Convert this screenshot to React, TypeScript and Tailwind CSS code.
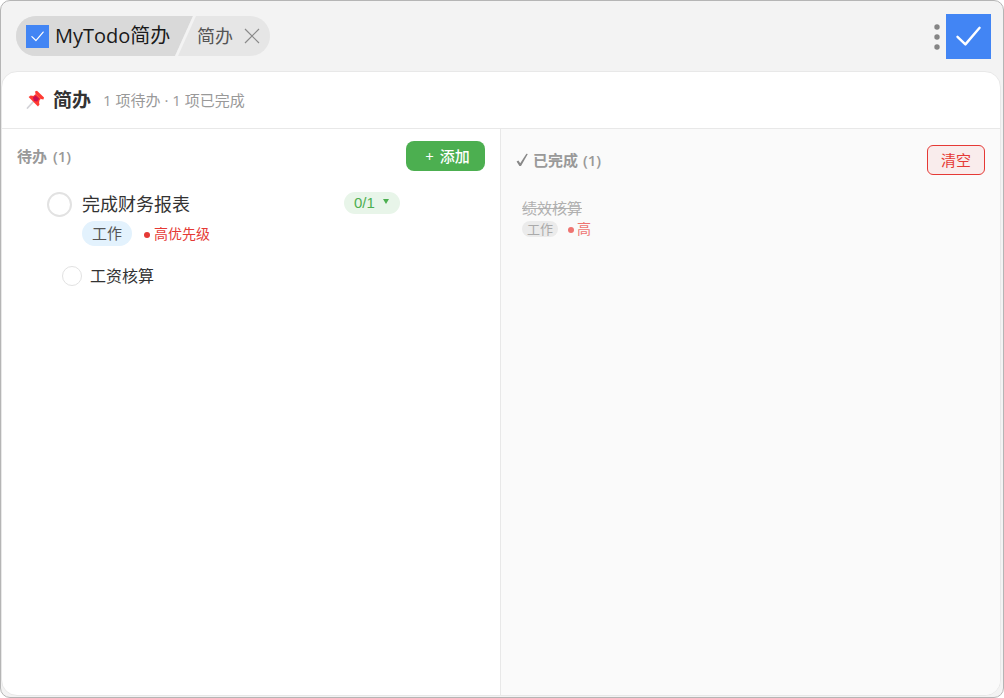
import { useState } from "react";

interface SubTask {
  id: number;
  title: string;
}

interface Task {
  id: number;
  title: string;
  tag: string;
  priority: string;
  subTasks: SubTask[];
}

const pending: Task[] = [
  {
    id: 1,
    title: "完成财务报表",
    tag: "工作",
    priority: "高优先级",
    subTasks: [{ id: 11, title: "工资核算" }],
  },
];

const finished: Task[] = [
  { id: 2, title: "绩效核算", tag: "工作", priority: "高", subTasks: [] },
];

const Logo = ({ className }: { className: string }) => (
  <svg className={className} viewBox="0 0 45 45" aria-hidden="true">
    <rect width="45" height="45" fill="#4285f4" />
    <path
      d="M11.5 22.8 L19.4 30.4 L33.6 13.8"
      fill="none"
      stroke="#fff"
      strokeWidth="2.4"
      strokeLinecap="round"
      strokeLinejoin="round"
    />
  </svg>
);

const Pin = () => (
  <svg className="h-5 w-5 shrink-0" viewBox="0 0 20 20" aria-hidden="true">
    <path d="M2.5 18 L8.5 11.5" stroke="#d3d3d8" strokeWidth="1.8" strokeLinecap="round" />
    <path d="M10 1.4 L12 0.8 L19 7.4 L18.4 9.4 L15.8 9 L10.6 4 Z" fill="#ff3a32" />
    <path d="M10.8 4 L15.8 8.8 L13.4 12 L7.6 6.6 Z" fill="#ff3a32" />
    <path d="M3.6 7 L5.6 5.6 L8.6 6 L14 11.2 L14.4 14.4 L13 16.4 Z" fill="#ff3a32" />
    <path d="M8 7.4 L10.6 5.4 L14.2 8.8 L12 11.4 L9 11 Z" fill="#c90f52" />
  </svg>
);

const TitleBar = () => (
  <header className="flex items-start justify-between pt-[13px] pr-2.5 pb-3 pl-[15px]">
    <nav className="mt-0.5 flex h-10 items-center overflow-hidden rounded-full bg-[#e6e6e6]">
      <a href="#home" className="flex h-10 w-[159px] items-center gap-1.5 bg-[#d9d9d9] pl-2.5 whitespace-nowrap">
        <Logo className="h-[23px] w-[23px] shrink-0" />
        <span className="text-[20px] leading-10 text-[#1a1a1a]">MyTodo简办</span>
      </a>
      <svg className="h-10 w-[21px] shrink-0" viewBox="0 0 21 40" aria-hidden="true">
        <path d="M0 0 H18 L0 40 Z" fill="#d9d9d9" />
        <path d="M18 0 H21 L3 40 H0 Z" fill="#f3f3f3" />
      </svg>
      <span className="pl-px text-[18px] leading-10 text-[#555]">简办</span>
      <button type="button" aria-label="关闭" className="flex h-10 w-[37px] items-center justify-center">
        <svg className="h-4 w-4" viewBox="0 0 16 16" stroke="#8a8a8a" strokeWidth="1.2">
          <path d="M1 1 L15 15 M15 1 L1 15" />
        </svg>
      </button>
    </nav>
    <div className="flex items-center gap-[3px]">
      <button type="button" aria-label="菜单" className="flex h-10 w-3 items-center justify-center">
        <svg className="h-[26px] w-[6px]" viewBox="0 0 6 26" fill="#858585">
          <circle cx="3" cy="3" r="2.7" />
          <circle cx="3" cy="13" r="2.7" />
          <circle cx="3" cy="23" r="2.7" />
        </svg>
      </button>
      <Logo className="h-[45px] w-[45px]" />
    </div>
  </header>
);

const TaskItem = ({ task }: { task: Task }) => {
  const [open, setOpen] = useState(true);

  return (
    <li className="pl-[30px]">
      <div className="flex items-start">
        <input
          id={`task-${task.id}`}
          type="checkbox"
          className="h-[25px] w-[25px] shrink-0 appearance-none rounded-full border-2 border-[#e2e2e2] bg-white checked:bg-[#4caf50]"
        />
        <div className="ml-2.5 flex-1">
          <label htmlFor={`task-${task.id}`} className="block text-[18px] leading-6 text-[#333]">
            {task.title}
          </label>
          <div className="mt-[5px] flex items-center gap-3">
            <span className="rounded-full bg-[#e3f2fd] px-2.5 text-[15px] leading-[25px] text-[#555]">
              {task.tag}
            </span>
            <span className="flex items-center gap-1 text-[14px] leading-5 text-[#e53935]">
              <span className="mt-0.5 h-1.5 w-1.5 rounded-full bg-[#e53935]" />
              {task.priority}
            </span>
          </div>
        </div>
        <button
          type="button"
          aria-expanded={open}
          onClick={() => setOpen(!open)}
          className="mr-[85px] flex h-[22px] w-14 items-center gap-2 rounded-full bg-[#e8f5e9] pl-2.5 font-['Liberation_Sans',sans-serif] text-[15px] leading-[22px] text-[#4caf50]"
        >
          0/{task.subTasks.length}
          <svg className="mb-1 h-[5px] w-[6px]" viewBox="0 0 6 5" fill="currentColor">
            <path d="M0 0 H6 L3 5 Z" />
          </svg>
        </button>
      </div>
      {open && (
        <ul className="mt-[18px] pl-[15px]">
          {task.subTasks.map((sub) => (
            <li key={sub.id} className="flex items-center gap-2">
              <input
                id={`sub-${sub.id}`}
                type="checkbox"
                className="h-5 w-5 appearance-none rounded-full border border-[#e2e2e2] bg-white checked:bg-[#4caf50]"
              />
              <label htmlFor={`sub-${sub.id}`} className="text-[16px] leading-6 text-[#333]">
                {sub.title}
              </label>
            </li>
          ))}
        </ul>
      )}
    </li>
  );
};

const FinishedItem = ({ task }: { task: Task }) => (
  <li className="pl-1.5">
    <p className="text-[15px] leading-5 text-[#b0b0b0] line-through">{task.title}</p>
    <div className="mt-[3px] flex items-center gap-2.5">
      <span className="rounded-full bg-[#ebebeb] px-[5px] text-[13px] leading-4 text-[#aaa]">{task.tag}</span>
      <span className="flex items-center gap-[3px] text-[14px] leading-4 text-[#ee7471]">
        <span className="mt-0.5 h-1.5 w-1.5 rounded-full bg-[#ee7471]" />
        {task.priority}
      </span>
    </div>
  </li>
);

const App = () => {
  return (
    <div className="flex min-h-screen flex-col rounded-[10px] border border-[#b5b5b5] bg-[#f3f3f3] pr-0.5 pb-px font-['Open_Sans','Noto_Sans_CJK_SC',sans-serif]">
      <TitleBar />
      <main className="flex flex-1 flex-col overflow-hidden rounded-2xl border border-[#e8e8e8] bg-white">
        <div className="flex h-[57px] items-center border-b border-[#e8e8e8] px-[23px]">
          <Pin />
          <h1 className="ml-2 text-[19px] leading-7 font-bold text-[#333]">简办</h1>
          <p className="ml-3 text-[15px] leading-6 text-[#999]">
            {pending.length} 项待办 · {finished.length} 项已完成
          </p>
        </div>
        <div className="grid flex-1 grid-cols-2">
          <section className="border-r border-[#e8e8e8] px-[15px] pt-3">
            <div className="flex items-center justify-between">
              <h2 className="flex gap-1.5 text-[15px] leading-6 font-bold text-[#999]">
                <span>待办</span>
                <span className="font-semibold">({pending.length})</span>
              </h2>
              <button
                type="button"
                className="flex h-[30px] w-[79px] items-center justify-center gap-1.5 rounded-lg bg-[#4caf50] pl-1 text-[15px] leading-5 font-medium text-white"
              >
                <span>+</span>
                <span>添加</span>
              </button>
            </div>
            <ul className="mt-[21px]">
              {pending.map((task) => (
                <TaskItem key={task.id} task={task} />
              ))}
            </ul>
          </section>
          <section className="bg-[#fafafa] px-[15px] pt-4">
            <div className="flex items-center justify-between">
              <h2 className="flex items-center gap-[5px] text-[15px] leading-6 font-bold text-[#999]">
                <svg className="h-3.5 w-3" viewBox="0 0 12 14" aria-hidden="true">
                  <path d="M0.6 8.4 L2.4 7.4 L4.2 10.2 L10.4 0.8 L11.8 1 L5 13 H3.4 Z" fill="#888" />
                </svg>
                <span>已完成</span>
                <span className="font-semibold">({finished.length})</span>
              </h2>
              <button
                type="button"
                className="h-[30px] w-[58px] rounded-md border border-[#e53935] bg-[#f9ecec] text-[15px] leading-5 text-[#e53935]"
              >
                清空
              </button>
            </div>
            <ul className="mt-[23px]">
              {finished.map((task) => (
                <FinishedItem key={task.id} task={task} />
              ))}
            </ul>
          </section>
        </div>
      </main>
    </div>
  );
};

export default App;
